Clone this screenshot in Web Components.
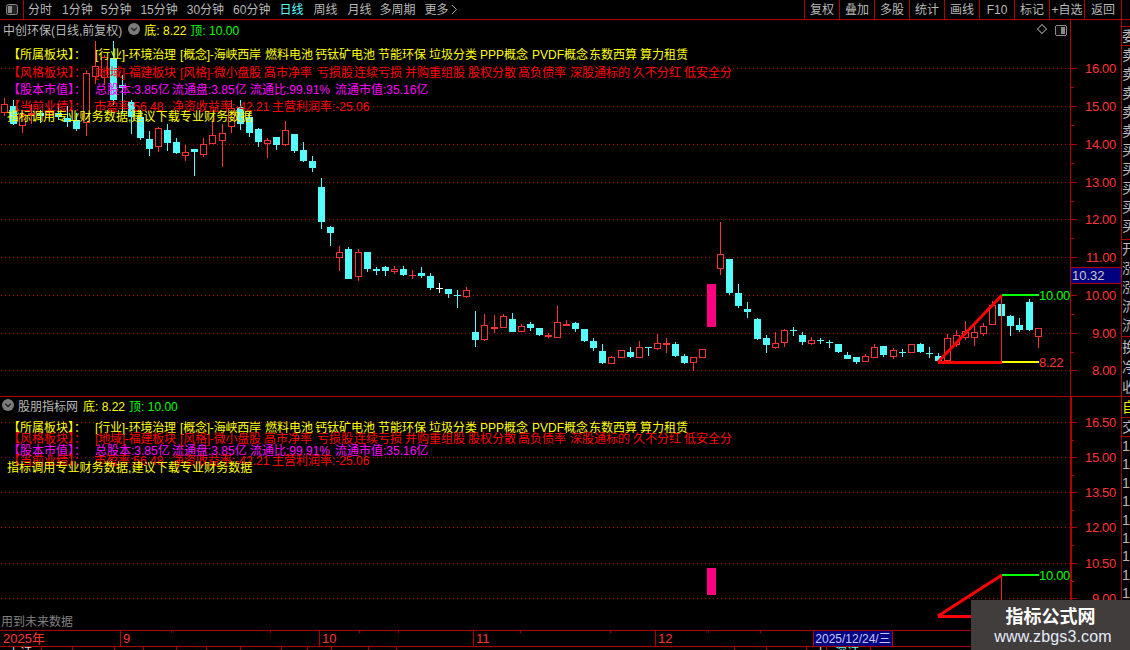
<!DOCTYPE html>
<html lang="zh">
<head>
<meta charset="utf-8">
<title>中创环保</title>
<style>
  html, body { margin: 0; background: #000; }
  body { font: 12px "Liberation Sans", "Noto Sans CJK SC", sans-serif; color: #c0c0c0; overflow: hidden; }
</style>
</head>
<body>
<kline-app></kline-app>

<script>
const LINE = '#b00000';
const UP = '#ff3232';
const DOWN = '#54fcfc';

// [center x, high, body top, body bottom, low, u=red / d=cyan / w=white], all in page pixels
const CANDLES = [
  [4,98,104,113,116,'u'],[13,100,106,124,125,'d'],[22,110,114,126,133,'u'],[31,104,113,115,124,'u'],
  [40,110,113,116,123,'d'],[49,108,112,116,120,'u'],[58,104,113,117,120,'d'],[67,106,118,122,127,'d'],
  [76,113,120,129,131,'d'],[86,70,73,123,136,'u'],[95,41,66,77,84,'u'],[104,55,57,78,85,'u'],
  [113,41,58,100,105,'d'],[122,75,85,88,113,'d'],[131,100,102,117,134,'d'],[140,110,117,138,140,'d'],
  [149,131,139,149,156,'d'],[158,127,128,147,152,'u'],[167,124,130,143,151,'d'],[176,138,142,153,154,'d'],
  [185,145,152,156,161,'u'],[194,149,149,152,176,'d'],[203,138,144,155,157,'u'],[212,119,135,144,144,'u'],
  [222,124,133,141,167,'u'],[231,100,108,127,133,'u'],[240,100,107,124,130,'d'],[249,112,117,133,137,'d'],
  [258,128,129,142,147,'d'],[267,138,140,144,158,'u'],[276,137,137,145,150,'d'],[285,121,130,145,146,'u'],
  [294,134,134,151,153,'d'],[303,142,150,161,162,'d'],[312,156,161,168,172,'d'],[321,178,187,222,229,'d'],
  [330,226,227,233,246,'d'],[339,246,252,258,271,'u'],[348,247,249,279,279,'d'],[358,249,252,277,281,'u'],
  [367,252,252,269,272,'d'],[376,267,269,271,275,'d'],[385,266,267,271,276,'d'],[394,266,269,272,274,'u'],
  [403,266,269,275,276,'d'],[412,270,275,276,279,'u'],[421,267,273,276,278,'d'],[430,273,276,288,290,'d'],
  [439,283,288,289,293,'w'],[448,289,289,294,298,'d'],[457,290,295,296,308,'d'],[466,287,290,297,298,'u'],
  [475,311,332,340,347,'d'],[484,314,325,340,341,'u'],[494,315,327,329,333,'u'],[503,314,316,328,328,'u'],
  [512,313,319,332,332,'d'],[521,324,326,332,332,'u'],[530,322,324,328,331,'d'],[539,328,328,335,336,'d'],
  [548,333,335,337,338,'u'],[557,306,322,338,338,'u'],[566,320,324,326,326,'u'],[575,322,323,329,332,'d'],
  [584,329,329,341,342,'d'],[593,338,341,348,351,'d'],[602,344,351,363,364,'d'],[611,356,357,364,364,'u'],
  [621,350,350,358,358,'u'],[630,347,352,357,358,'d'],[639,341,347,358,358,'u'],[648,347,347,348,356,'d'],
  [657,334,343,349,350,'u'],[666,338,343,345,353,'u'],[675,342,344,356,357,'d'],[684,354,356,363,364,'d'],
  [693,357,357,363,371,'u'],[702,349,349,358,358,'u'],[720,222,254,269,275,'u'],[729,259,259,293,295,'d'],
  [738,284,293,306,308,'d'],[747,302,309,312,318,'d'],[757,318,319,339,340,'d'],[766,335,338,345,353,'d'],
  [775,332,343,348,349,'u'],[784,329,330,343,347,'u'],[793,327,330,331,336,'d'],[802,332,335,342,345,'d'],
  [811,337,340,344,345,'u'],[820,338,340,341,344,'d'],[829,340,342,343,348,'d'],[838,344,344,352,353,'d'],
  [847,352,355,359,359,'d'],[856,357,357,362,364,'d'],[865,354,356,362,362,'u'],[874,344,347,358,358,'u'],
  [883,346,346,355,357,'d'],[893,348,350,357,359,'u'],[902,349,352,353,357,'d'],[911,344,344,353,353,'u'],
  [920,343,344,352,353,'d'],[929,347,353,354,358,'d'],[938,353,356,361,361,'d'],[947,334,338,361,361,'u'],
  [956,330,335,345,347,'u'],[965,321,331,338,340,'u'],[974,325,332,338,346,'u'],[983,323,326,334,336,'u'],
  [992,301,305,325,325,'u'],[1001,304,304,316,316,'d'],[1010,315,316,326,336,'d'],[1019,318,325,330,332,'d'],
  [1029,299,302,330,331,'d'],[1038,328,328,337,348,'u']
];

function candleSvg([c, hi, top, bot, lo, kind]) {
  const color = kind === 'u' ? UP : kind === 'd' ? DOWN : '#fff';
  let s = `<rect x="${c}" y="${hi}" width="1" height="${lo - hi}" fill="${color}"/>`;
  if (kind === 'u' && bot - top > 2) {
    s += `<rect x="${c - 2.5}" y="${top + .5}" width="6" height="${bot - top - 1}" fill="#000" stroke="${color}"/>`;
  } else {
    s += `<rect x="${c - 3}" y="${top}" width="7" height="${bot - top}" fill="${color}"/>`;
  }
  return s;
}

// gridline + axis tick + label for every price level
function gridSvg(levels) {
  let s = '';
  levels.forEach(([y, label], i) => {
    s += `<line x1="1" x2="1070" y1="${y + .5}" y2="${y + .5}" stroke="#a00000" stroke-dasharray="1 3"/>`;
    s += `<rect x="1071" y="${y}" width="6" height="1" fill="${LINE}"/>`;
    s += `<text x="1116" y="${y + 5}" text-anchor="end" fill="#ff3232" font-size="13" letter-spacing="-.3">${label}</text>`;
    const next = levels[i + 1];
    if (next) s += `<rect x="1071" y="${Math.round((y + next[0]) / 2)}" width="3" height="1" fill="${LINE}"/>`;
  });
  return s;
}

class TopBar extends HTMLElement {
  constructor() {
    super();
    this.attachShadow({ mode: 'open' });
    const tabs = [['分时',10],['1分钟',8],['5分钟',9],['15分钟',9],['30分钟',9],['60分钟',9],['日线',10],['周线',10],['月线',8],['多周期',9]];
    const tools = ['复权','叠加','多股','统计','画线','F10','标记','+自选','返回'];
    this.shadowRoot.innerHTML = `
      <style>
        :host { display: flex; height: 19px; border-bottom: 1px solid ${LINE}; color: #b8b8b8; line-height: 20px; }
        .toggle { width: 23px; border-right: 1px solid ${LINE}; display: flex; align-items: center; justify-content: center; flex: none; }
        .tabs { display: flex; padding-left: 4px; flex: 1; }
        .tabs span { flex: none; }
        .tabs .on { color: #55ffff; }
        .tools { display: flex; margin-right: 8px; border-right: 1px solid ${LINE}; }
        .tools span { width: 34px; border-left: 1px solid ${LINE}; text-align: center; }
        .tools span:last-child { width: 36px; }
        svg { display: block; }
      </style>
      <div class="toggle">
        <svg width="12" height="11" viewBox="0 0 12 11"><rect x=".5" y=".5" width="11" height="10" rx="2" fill="#222" stroke="#8a8a8a"/><rect x="2" y="2" width="4" height="7" fill="#8a8a8a"/></svg>
      </div>
      <div class="tabs">
        ${tabs.map(([t, gap]) => `<span class="${t === '日线' ? 'on' : ''}" style="margin-right:${gap}px">${t}</span>`).join('')}
        <span>更多</span>
        <svg width="10" height="19" viewBox="0 0 10 19"><path d="M3 5l4.5 4.5L3 14" fill="none" stroke="#a8a8a8"/></svg>
      </div>
      <div class="tools">${tools.map(t => `<span>${t}</span>`).join('')}</div>
    `;
  }
}

class PaneTitle extends HTMLElement {
  constructor() {
    super();
    this.attachShadow({ mode: 'open' });
    const name = this.getAttribute('name');
    const leading = this.hasAttribute('leading');
    const dot = `<svg width="12" height="12" viewBox="0 0 12 12"><circle cx="6" cy="6" r="6" fill="#7c7c7c"/><path d="M3.2 4.8L6 7.5l2.8-2.7" fill="none" stroke="#222" stroke-width="1.3"/></svg>`;
    this.shadowRoot.innerHTML = `
      <style>
        :host { display: flex; align-items: center; height: 18px; padding-left: 3px; color: #b8b8b8; white-space: nowrap; }
        svg { flex: none; margin: 0 4px 0 6px; }
        .lead { margin: 0 4px 0 -1px; }
        .low { color: #ffff00; }
        .high { color: #00ff00; margin-left: 4px; }
        .name { margin-right: ${leading ? 5 : 0}px; }
      </style>
      ${leading ? dot.replace('<svg', '<svg class="lead"') : ''}
      <span class="name">${name}</span>
      ${leading ? '' : dot}
      <span class="low">底: 8.22</span>
      <span class="high">顶: 10.00</span>
    `;
  }
}

class InfoRows extends HTMLElement {
  constructor() {
    super();
    this.attachShadow({ mode: 'open' });
    const heights = this.getAttribute('heights').split(',');
    const rows = [
      ['#ffff00', [[8,'【所属板块】：'],[95,'[行业]-环境治理'],[180,'[概念]-海峡西岸'],[265,'燃料电池'],[315,'钙钛矿电池'],[378,'节能环保'],[429,'垃圾分类'],[480,'PPP概念'],[532,'PVDF概念'],[589,'东数西算'],[640,'算力租赁']]],
      ['#ff0000', [[8,'【风格板块】：'],[95,'[地域]-福建板块'],[180,'[风格]-微小盘股'],[264,'高市净率'],[317,'亏损股'],[354,'连续亏损'],[405,'并购重组股'],[468,'股权分散'],[518,'高负债率'],[570,'深股通标的'],[633,'久不分红'],[684,'低安全分']]],
      ['#ff00ff', [[8,'【股本市值】：'],[95,'总股本:3.85亿'],[172,'流通盘:3.85亿'],[250,'流通比:99.91%'],[335,'流通市值:35.16亿']]],
      ['#ff0000', [[8,'【当前业绩】：'],[94,'市盈率:56.48'],[172,'净资收益率:-42.21'],[272,'主营利润率:-25.06']]],
      ['#ffff00', [[7,'指标调用专业财务数据,建议下载专业财务数据']]]
    ];
    this.shadowRoot.innerHTML = `
      <style>
        :host { display: block; white-space: nowrap; line-height: 14px; }
        .row { display: flex; }
        .row span { flex: none; }
        .tag { letter-spacing: -.2px; }
        .long { letter-spacing: .1px; }
      </style>
      ${rows.map(([color, cells], r) => `
        <div class="row" style="color:${color};height:${heights[r]}px;padding-left:${cells[0][0]}px">
          ${cells.map(([x, t], i) => {
            const next = cells[i + 1];
            const cls = t[0] === '[' ? 'tag' : next ? '' : cells.length === 1 ? 'long' : '';
            return `<span class="${cls}" style="${next ? `width:${next[0] - x}px` : ''}">${t}</span>`;
          }).join('')}
        </div>`).join('')}
    `;
  }
}

class PriceChart extends HTMLElement {
  constructor() {
    super();
    this.attachShadow({ mode: 'open' });
    const top = +this.getAttribute('origin');
    const height = +this.getAttribute('span');
    this.shadowRoot.innerHTML = `
      <style>
        :host { display: block; position: relative; height: ${height}px; border-bottom: ${this.getAttribute('rule') || 0}px solid ${LINE}; }
        svg { position: absolute; left: 0; top: 0; }
        ::slotted(info-rows) { position: absolute; left: 0; }
        ::slotted(pane-title) { position: relative; }
      </style>
      <svg width="1121" height="${height}" viewBox="0 ${top} 1121 ${height}" shape-rendering="crispEdges" font-family="Liberation Sans, Noto Sans CJK SC, sans-serif">
        ${this.drawing()}
      </svg>
      <slot></slot>
    `;
  }

  drawing() {
    return '';
  }
}

class MainChart extends PriceChart {
  drawing() {
    const levels = [[68,'16.00'],[106,'15.00'],[144,'14.00'],[182,'13.00'],[219,'12.00'],[257,'11.00'],[295,'10.00'],[333,'9.00'],[370,'8.00']];
    return `
      ${gridSvg(levels)}
      <rect x="1070" y="20" width="1" height="376" fill="${LINE}"/>
      ${CANDLES.map(candleSvg).join('')}
      <rect x="707" y="284" width="9" height="43" fill="#ff0080"/>
      <rect x="1001" y="295" width="1" height="67" fill="#ff2020"/>
      <g shape-rendering="auto"><path d="M938 362L1002 295" stroke="#ff0000" stroke-width="3" fill="none"/></g>
      <rect x="938" y="361" width="64" height="3" fill="#ff0000"/>
      <rect x="1002" y="294" width="37" height="2" fill="#00ff00"/>
      <rect x="1002" y="361" width="37" height="2" fill="#ffff00"/>
      <text x="1039" y="300" fill="#00ff00" font-size="13" letter-spacing="-.3">10.00</text>
      <text x="1039" y="367" fill="#ff3232" font-size="13" letter-spacing="-.3">8.22</text>
      <path d="M1042 24.5l4.5 4.5-4.5 4.5-4.5-4.5z" fill="none" stroke="#666"/>
      <rect x="1055.5" y="25.5" width="11" height="10" rx="2" fill="#111" stroke="#8a8a8a"/>
      <rect x="1061" y="27" width="4" height="7" fill="#8a8a8a"/>
    `;
  }
}

class IndicatorChart extends PriceChart {
  drawing() {
    const levels = [[422,'16.50'],[457,'15.00'],[492,'13.50'],[527,'12.00'],[563,'10.50'],[598,'9.00']];
    return `
      ${gridSvg(levels)}
      <rect x="1070" y="397" width="2" height="233" fill="${LINE}"/>
      <rect x="707" y="568" width="9" height="27" fill="#ff0080"/>
      <rect x="1001" y="575" width="1" height="41" fill="#ff2020"/>
      <g shape-rendering="auto"><path d="M938 616L1002 575" stroke="#ff0000" stroke-width="3" fill="none"/></g>
      <rect x="938" y="615" width="64" height="3" fill="#ff0000"/>
      <rect x="1002" y="574" width="37" height="2" fill="#00ff00"/>
      <text x="1039" y="580" fill="#00ff00" font-size="13" letter-spacing="-.3">10.00</text>
    `;
  }
}

class SideStrip extends HTMLElement {
  constructor() {
    super();
    this.attachShadow({ mode: 'open' });
    const rows = (labels, h) => labels.map(t => `<div style="height:${h}px;line-height:${h}px">${t}</div>`).join('');
    this.shadowRoot.innerHTML = `
      <style>
        :host { display: block; position: relative; width: 8px; border-left: 1px solid ${LINE}; font-size: 14px; overflow: hidden; white-space: nowrap; color: #b8b8b8; padding-top: 6px; box-sizing: content-box; }
        .sep { height: 1px; background: ${LINE}; }
        .gold { color: #e8e800; }
      </style>
      <div class="sep"></div>
      ${rows(['委比'], 18)}
      <div class="sep"></div>
      ${rows(['卖五','卖四','卖三','卖二','卖一','买一','买二','买三','买四','买五'], 19)}
      <div style="height:3px"></div>
      <div class="sep"></div>
      ${rows(['开盘','涨幅','涨停','流通','流通'], 19)}
      <div style="height:1px"></div>
      <div class="sep"></div>
      ${rows(['换手','净值','收益'], 20)}
      <div class="sep" style="margin-top:-1px"></div>
      <div class="gold">${rows(['自选'], 20)}</div>
      <div class="sep"></div>
      ${rows(['交易'], 18)}
      <div class="sep"></div>
      ${rows(Array(9).fill('1'), 18.4)}
    `;
  }
}

class PriceTag extends HTMLElement {
  constructor() {
    super();
    this.attachShadow({ mode: 'open' });
    this.shadowRoot.innerHTML = `
      <style>
        :host { display: block; box-sizing: border-box; width: 51px; height: 17px; padding-left: 1px; background: #000080; border: 1px solid ${LINE}; border-left: 0; color: #c8c8c8; font-size: 13px; line-height: 15px; }
      </style>
      <slot></slot>
    `;
  }
}

class TimeAxis extends HTMLElement {
  constructor() {
    super();
    this.attachShadow({ mode: 'open' });
    const cells = [[121,'2025年',3],[199,'9',2],[154,'10',2],[182,'11',2],[158,'12',2]];
    const ticks = [171, 270, 359, 398, 520, 610, 708, 760];
    this.shadowRoot.innerHTML = `
      <style>
        :host { display: flex; position: relative; height: 15px; border-top: 1px solid ${LINE}; border-bottom: 1px solid ${LINE}; color: #ff3232; font-size: 13px; line-height: 16px; }
        .cell { flex: none; box-sizing: border-box; border-right: 1px solid ${LINE}; }
        .date { flex: none; box-sizing: border-box; width: 80px; background: #000080; border: 1px solid ${LINE}; border-width: 0 1px; color: #c8c8ff; font-size: 12px; line-height: 16px; text-align: center; margin-left: -1px; }
        i { position: absolute; top: 0; width: 1px; height: 2px; background: ${LINE}; }
      </style>
      ${cells.map(([w, t, pad]) => `<div class="cell" style="width:${w}px;padding-left:${pad}px">${t}</div>`).join('')}
      <div class="date">2025/12/24/三</div>
      ${ticks.map(x => `<i style="left:${x}px"></i>`).join('')}
    `;
  }
}

class StatusBar extends HTMLElement {
  constructor() {
    super();
    this.attachShadow({ mode: 'open' });
    const cells = [[42,'上证',''],[31,'',''],[42,'',''],[29,'',''],[33,'',''],[30,'',''],[34,'',''],[41,'',''],[26,'',''],[24,'',''],[37,'',''],[28,'',''],[338,'',''],[32,'',''],[40,'',''],[20,'上',''],[44,'深证','#55ffff']];
    this.shadowRoot.innerHTML = `
      <style>
        :host { display: flex; height: 4px; overflow: hidden; color: #d8d8d8; line-height: 13px; }
        div { flex: none; box-sizing: border-box; border-right: 1px solid ${LINE}; padding-left: 8px; height: 4px; }
      </style>
      ${cells.map(([w, t, c]) => `<div style="width:${w}px;${c ? `color:${c}` : ''}">${t}</div>`).join('')}
    `;
  }
}

class SiteBadge extends HTMLElement {
  constructor() {
    super();
    this.attachShadow({ mode: 'open' });
    this.shadowRoot.innerHTML = `
      <style>
        :host { display: flex; flex-direction: column; align-items: center; box-sizing: border-box; width: 159px; height: 50px; padding-top: 4px; background: #423d3d; color: #fff; }
        .name { font: bold 18px/23px "Noto Sans CJK SC", sans-serif; }
        .url { font: 16px/20px "Liberation Sans", sans-serif; color: #e4ecfa; letter-spacing: .15px; margin-left: 5px; }
      </style>
      <div class="name"><slot></slot></div>
      <div class="url"><slot name="url"></slot></div>
    `;
  }
}

class FutureNote extends HTMLElement {
  constructor() {
    super();
    this.attachShadow({ mode: 'open' });
    this.shadowRoot.innerHTML = `
      <style>
        :host { display: block; position: absolute; left: 1px; top: 218px; color: #808080; line-height: 14px; }
      </style>
      <slot></slot>
    `;
  }
}

class KlineApp extends HTMLElement {
  constructor() {
    super();
    this.attachShadow({ mode: 'open' });
    this.shadowRoot.innerHTML = `
      <style>
        :host { display: block; position: relative; width: 1130px; height: 650px; overflow: hidden; background: #000; }
        .body { display: flex; height: 610px; }
        .panes { width: 1121px; flex: none; }
        main-chart info-rows { top: 28px; }
        indicator-chart info-rows { top: 24px; }
        indicator-chart pane-title { top: -1px; }
        price-tag { position: absolute; left: 1071px; top: 267px; }
        site-badge { position: absolute; left: 971px; top: 600px; }
      </style>
      <top-bar></top-bar>
      <div class="body">
        <div class="panes">
          <main-chart origin="20" span="376" rule="1">
            <pane-title name="中创环保(日线,前复权)"></pane-title>
            <info-rows heights="18,17,17,10,14"></info-rows>
          </main-chart>
          <indicator-chart origin="397" span="233">
            <pane-title name="股朋指标网" leading></pane-title>
            <info-rows heights="11,12,10,7,14"></info-rows>
            <future-note>用到未来数据</future-note>
          </indicator-chart>
        </div>
        <side-strip></side-strip>
      </div>
      <time-axis></time-axis>
      <status-bar></status-bar>
      <price-tag>10.32</price-tag>
      <site-badge>指标公式网<span slot="url">www.zbgs3.com</span></site-badge>
    `;
  }
}

customElements.define('top-bar', TopBar);
customElements.define('pane-title', PaneTitle);
customElements.define('info-rows', InfoRows);
customElements.define('main-chart', MainChart);
customElements.define('indicator-chart', IndicatorChart);
customElements.define('side-strip', SideStrip);
customElements.define('price-tag', PriceTag);
customElements.define('time-axis', TimeAxis);
customElements.define('status-bar', StatusBar);
customElements.define('site-badge', SiteBadge);
customElements.define('future-note', FutureNote);
customElements.define('kline-app', KlineApp);
</script>
</body>
</html>
